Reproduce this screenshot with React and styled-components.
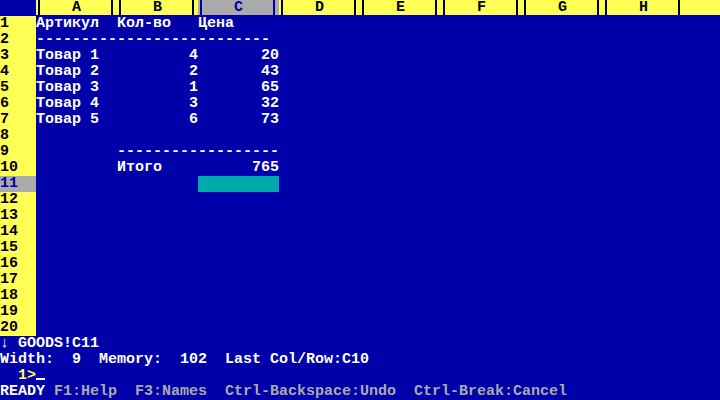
import React from 'react';
import styled, { createGlobalStyle } from 'styled-components';

const GlobalStyle = createGlobalStyle`
  html, body {
    margin: 0;
    padding: 0;
    background: #0000aa;
  }
`;

const Screen = styled.div`
  width: 720px;
  height: 400px;
  overflow: hidden;
  background: #0000aa;
  color: #ffffff;
  font-family: 'Liberation Mono', 'DejaVu Sans Mono', monospace;
  font-size: 15px;
  font-weight: bold;
  line-height: 16px;
  display: flex;
  flex-direction: column;
`;

const Sheet = styled.div`
  display: grid;
  grid-template-columns: 36px repeat(8, 81px) 1fr;
  grid-auto-rows: 16px;
`;

const Corner = styled.div`
  background: #0000aa;
`;

const ColHeader = styled.div`
  position: relative;
  height: 15px;
  line-height: 15px;
  text-align: center;
  background: ${(props) => (props.$selected ? '#aaaaaa' : '#ffff55')};
  color: ${(props) => (props.$selected ? '#0000aa' : '#000000')};

  &::before,
  &::after {
    content: '';
    display: ${(props) => (props.$filler ? 'none' : 'block')};
    position: absolute;
    top: 0;
    bottom: 0;
    width: 2px;
    background: ${(props) => (props.$selected ? '#0000aa' : '#000000')};
  }
  &::before {
    left: 2px;
  }
  &::after {
    left: 75px;
  }
`;

const RowLabel = styled.div`
  background: ${(props) => (props.$selected ? '#aaaaaa' : '#ffff55')};
  color: ${(props) => (props.$selected ? '#0000aa' : '#000000')};
  white-space: pre;
`;

const Cell = styled.div`
  white-space: pre;
  overflow: visible;
  text-align: ${(props) => (props.$right ? 'right' : 'left')};
  background: ${(props) => (props.$active ? '#00aaaa' : 'transparent')};
  position: relative;
`;

const StatusArea = styled.div`
  display: flex;
  flex-direction: column;
`;

const Line = styled.div`
  height: 16px;
  white-space: pre;
`;

const Text = styled.span`
  color: ${(props) => props.$color || '#ffffff'};
`;

const Cursor = styled.span`
  display: inline-block;
  width: 9px;
  height: 2px;
  background: #ffffff;
  vertical-align: -1px;
`;

const COLS = ['A', 'B', 'C', 'D', 'E', 'F', 'G', 'H'];

const data = {
  1: { A: 'Артикул', B: 'Кол-во', C: 'Цена' },
  2: { A: '-'.repeat(26) },
  3: { A: 'Товар 1', B: 4, C: 20 },
  4: { A: 'Товар 2', B: 2, C: 43 },
  5: { A: 'Товар 3', B: 1, C: 65 },
  6: { A: 'Товар 4', B: 3, C: 32 },
  7: { A: 'Товар 5', B: 6, C: 73 },
  9: { B: '-'.repeat(18) },
  10: { B: 'Итого', C: 765 },
};

const activeCol = 'C';
const activeRow = 11;

function App() {
  const rows = Array.from({ length: 20 }, (_, i) => i + 1);

  return (
    <React.Fragment>
      <GlobalStyle />
      <Screen>
        <Sheet>
          <Corner />
          {COLS.map((c) => (
            <ColHeader key={c} $selected={c === activeCol}>
              {c}
            </ColHeader>
          ))}
          <ColHeader $filler />

          {rows.map((r) => (
            <React.Fragment key={r}>
              <RowLabel $selected={r === activeRow}>{r}</RowLabel>
              {COLS.map((c) => {
                const v = data[r] && data[r][c];
                return (
                  <Cell
                    key={c}
                    $right={typeof v === 'number'}
                    $active={r === activeRow && c === activeCol}
                  >
                    {v !== undefined ? v : ''}
                  </Cell>
                );
              })}
              <Cell />
            </React.Fragment>
          ))}
        </Sheet>

        <StatusArea>
          <Line>↓ GOODS!C11</Line>
          <Line>Width:  9  Memory:  102  Last Col/Row:C10</Line>
          <Line>
            <Text $color="#ffff55">  1&gt;</Text>
            <Cursor />
          </Line>
          <Line>
            <Text>READY </Text>
            <Text $color="#aaaaaa">F1:Help  F3:Names  Ctrl-Backspace:Undo  Ctrl-Break:Cancel</Text>
          </Line>
        </StatusArea>
      </Screen>
    </React.Fragment>
  );
}

export default App;
